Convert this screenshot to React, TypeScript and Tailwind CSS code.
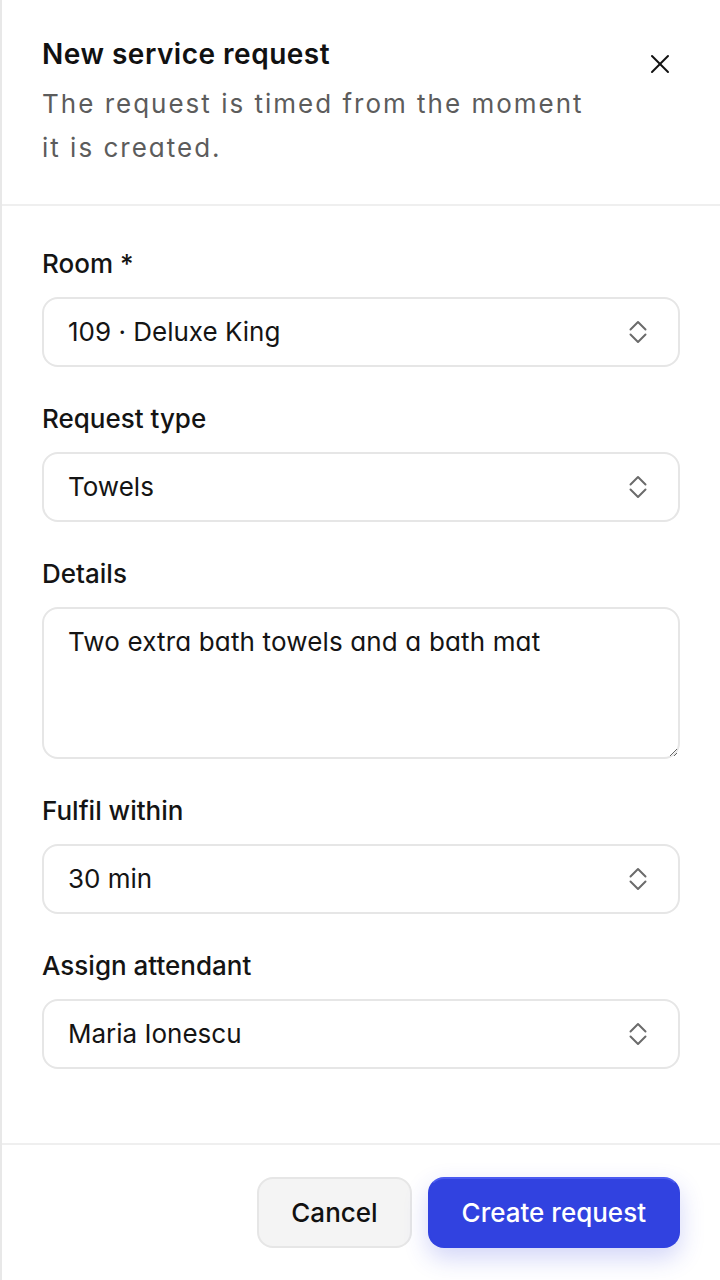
import { ReactNode } from 'react';

function UpDownIcon() {
  return (
    <svg width="20" height="26" viewBox="0 0 20 26" fill="none" stroke="#6b6b6b" strokeWidth="2" strokeLinecap="round" strokeLinejoin="round" className="shrink-0">
      <path d="M2.5 10.5 L10 3 L17.5 10.5" />
      <path d="M2.5 15.5 L10 23 L17.5 15.5" />
    </svg>
  );
}

function Field({ label, children }: { label: string; children: ReactNode }) {
  return (
    <div className="flex flex-col">
      <label className="text-[26px] leading-9 font-medium text-[#141414] mb-[15px]">{label}</label>
      {children}
    </div>
  );
}

function SelectBox({ value }: { value: string }) {
  return (
    <div className="h-[70px] flex items-center justify-between pl-6 pr-[30px] border-2 border-[#e6e6e6] rounded-2xl bg-white">
      <span className="text-[26px] leading-9 text-[#141414]">{value}</span>
      <UpDownIcon />
    </div>
  );
}

export default function App() {
  return (
    <div className="h-[1280px] w-[720px] bg-white border-l-2 border-[#e8e8e8] flex flex-col font-['Inter',sans-serif]">
      {/* Header */}
      <div className="flex items-start justify-between px-10 pt-9 pb-[34px] border-b-2 border-[#efefef]">
        <div className="flex-1">
          <h2 className="text-[28px] leading-9 font-semibold tracking-[0.5px] text-[#111]">New service request</h2>
          <p className="mt-[10px] max-w-[560px] text-[26px] leading-[44px] tracking-[2px] text-[#5c5c5c] [font-feature-settings:'cv11']">
            The request is timed from the moment it is created.
          </p>
        </div>
        <button className="w-10 h-10 mt-2 flex items-center justify-center" aria-label="Close">
          <svg width="20" height="20" viewBox="0 0 20 20" fill="none" stroke="#111" strokeWidth="2" strokeLinecap="round">
            <path d="M2 2 L18 18" />
            <path d="M18 2 L2 18" />
          </svg>
        </button>
      </div>

      {/* Form */}
      <div className="flex-1 px-10 pt-10 flex flex-col gap-[34px]">
        <Field label="Room *">
          <SelectBox value="109 · Deluxe King" />
        </Field>
        <Field label="Request type">
          <SelectBox value="Towels" />
        </Field>
        <Field label="Details">
          <textarea
            defaultValue="Two extra bath towels and a bath mat"
            className="h-[152px] px-6 pt-[15px] border-2 border-[#e6e6e6] rounded-2xl text-[26px] leading-9 tracking-[0.15px] text-[#141414] outline-none [font-feature-settings:'cv11']"
          />
        </Field>
        <Field label="Fulfil within">
          <SelectBox value="30 min" />
        </Field>
        <Field label="Assign attendant">
          <SelectBox value="Maria Ionescu" />
        </Field>
      </div>

      {/* Footer */}
      <div className="flex justify-end gap-4 px-10 py-8 border-t-2 border-[#efefef]">
        <button className="h-[71px] px-8 rounded-2xl border-2 border-[#e6e6e6] bg-[#f4f4f4] text-[26px] font-medium text-[#111]">
          Cancel
        </button>
        <button className="h-[71px] px-8 rounded-2xl border-2 border-[#3142e0] border-t-[#4a5af0] bg-[#3142e0] text-[26px] font-medium text-white shadow-[0_10px_24px_rgba(49,66,224,0.22)]">
          Create request
        </button>
      </div>
    </div>
  );
}
